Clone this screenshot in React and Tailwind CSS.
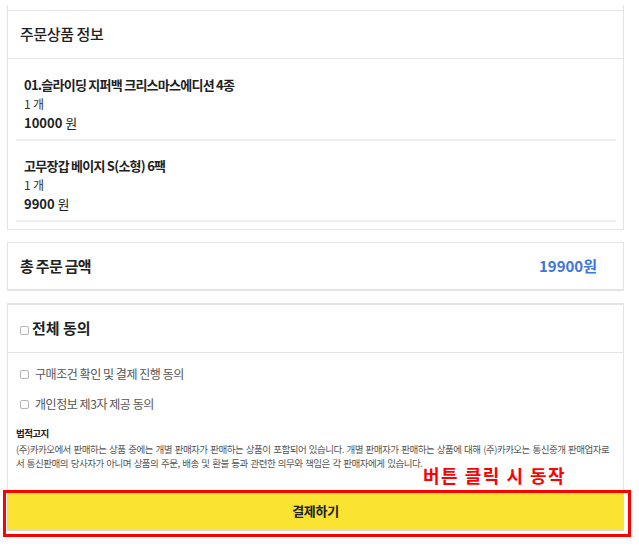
import React from "react";

const font = { fontFamily: '"Noto Sans CJK KR", "Noto Sans", sans-serif' };

function Box({ className = "" }) {
  return (
    <span
      className={`inline-block w-[9px] h-[9px] rounded-[2px] border border-[#b5b5b5] bg-white ${className}`}
    />
  );
}

function Item({ name, qty, price, first }) {
  return (
    <div className={`pl-[8px] ${first ? "pt-[16px]" : "pt-[15px]"} pb-[7px] border-b-2 border-[#eeeeee]`}>
      <div className="text-[13px] leading-[19px] font-bold text-[#222] tracking-[-0.75px]">{name}</div>
      <div className="text-[12px] leading-[19px] text-[#333] tracking-[-0.2px]">{qty}</div>
      <div className="text-[13px] leading-[19px] text-[#222]">
        <span className="font-bold">{price}</span> <span>원</span>
      </div>
    </div>
  );
}

export default function App() {
  return (
    <div className="relative w-[639px] h-[557px] bg-white pt-[5px]" style={font}>
      {/* Card 1 */}
      <div className="ml-[7px] w-[617px] border-x border-b border-[#e4e4e4] pt-[5px]">
        <div className="h-[49px] border-y border-[#e4e4e4] flex items-center pl-[12px]">
          <span className="text-[15px] font-medium text-[#222] tracking-[-0.4px]">주문상품 정보</span>
        </div>
        <div className="pl-[8px] pr-[7px] pb-[7px]">
          <Item first name="01.슬라이딩 지퍼백 크리스마스에디션 4종" qty="1 개" price="10000" />
          <Item name="고무장갑 베이지 S(소형) 6팩" qty="1 개" price="9900" />
        </div>
      </div>

      {/* Card 2 */}
      <div className="ml-[7px] mt-[12px] w-[617px] h-[49px] border border-b-2 border-[#e4e4e4] flex items-center justify-between pl-[12px] pr-[26px]">
        <span className="text-[15px] font-bold text-[#222] tracking-[-0.7px]">총 주문 금액</span>
        <span className="text-[15px] font-bold text-[#3f75dc] tracking-[0px]">19900원</span>
      </div>

      {/* Card 3 */}
      <div className="ml-[7px] mt-[12px] w-[617px] h-[188px] border-x border-t-2 border-b border-[#e4e4e4]">
        <div className="h-[48px] border-b border-[#e4e4e4] flex items-center pl-[12px]">
          <Box className="mr-[3px] mt-[3px]" />
          <span className="text-[15px] font-bold text-[#222] tracking-[0px]">전체 동의</span>
        </div>
        <div className="pt-[6px]">
          <div className="h-[30px] flex items-center pl-[12px]">
            <Box className="mr-[6px]" />
            <span className="text-[12px] text-[#555] tracking-[-0.45px]">구매조건 확인 및 결제 진행 동의</span>
          </div>
          <div className="h-[30px] flex items-center pl-[12px]">
            <Box className="mr-[6px]" />
            <span className="text-[12px] text-[#555] tracking-[-0.45px]">개인정보 제3자 제공 동의</span>
          </div>
        </div>
        <div className="mt-[7px] pl-[8px]">
          <div className="text-[9.5px] leading-[14px] font-bold text-[#222] tracking-[-0.6px] mb-[2px]">법적고지</div>
          <div className="text-[9.5px] leading-[14px] text-[#555] tracking-[-0.5px] [word-spacing:1px] whitespace-nowrap">
            (주)카카오에서 판매하는 상품 중에는 개별 판매자가 판매하는 상품이 포함되어 있습니다. 개별 판매자가 판매하는 상품에 대해 (주)카카오는 통신중개 판매업자로
            <br />
            서 통신판매의 당사자가 아니며 상품의 주문, 배송 및 환불 등과 관련한 의무와 책임은 각 판매자에게 있습니다.
          </div>
        </div>
      </div>

      {/* Pay button */}
      <button className="block ml-[7px] mt-[1px] w-[617px] h-[38px] bg-[#fbe332] shadow-[0_1px_0_#d8d8d8] text-[13px] font-bold text-[#222] tracking-[-0.3px]">
        결제하기
      </button>

      {/* Annotation overlay */}
      <div className="absolute left-[423px] top-[463px] text-[18px] leading-[24px] font-bold text-[#ff0000] tracking-[1.5px]">
        버튼 클릭 시 동작
      </div>
      <div className="absolute left-[3px] top-[490px] w-[628px] h-[47px] border-[3px] border-[#ff0000] pointer-events-none" />
    </div>
  );
}
